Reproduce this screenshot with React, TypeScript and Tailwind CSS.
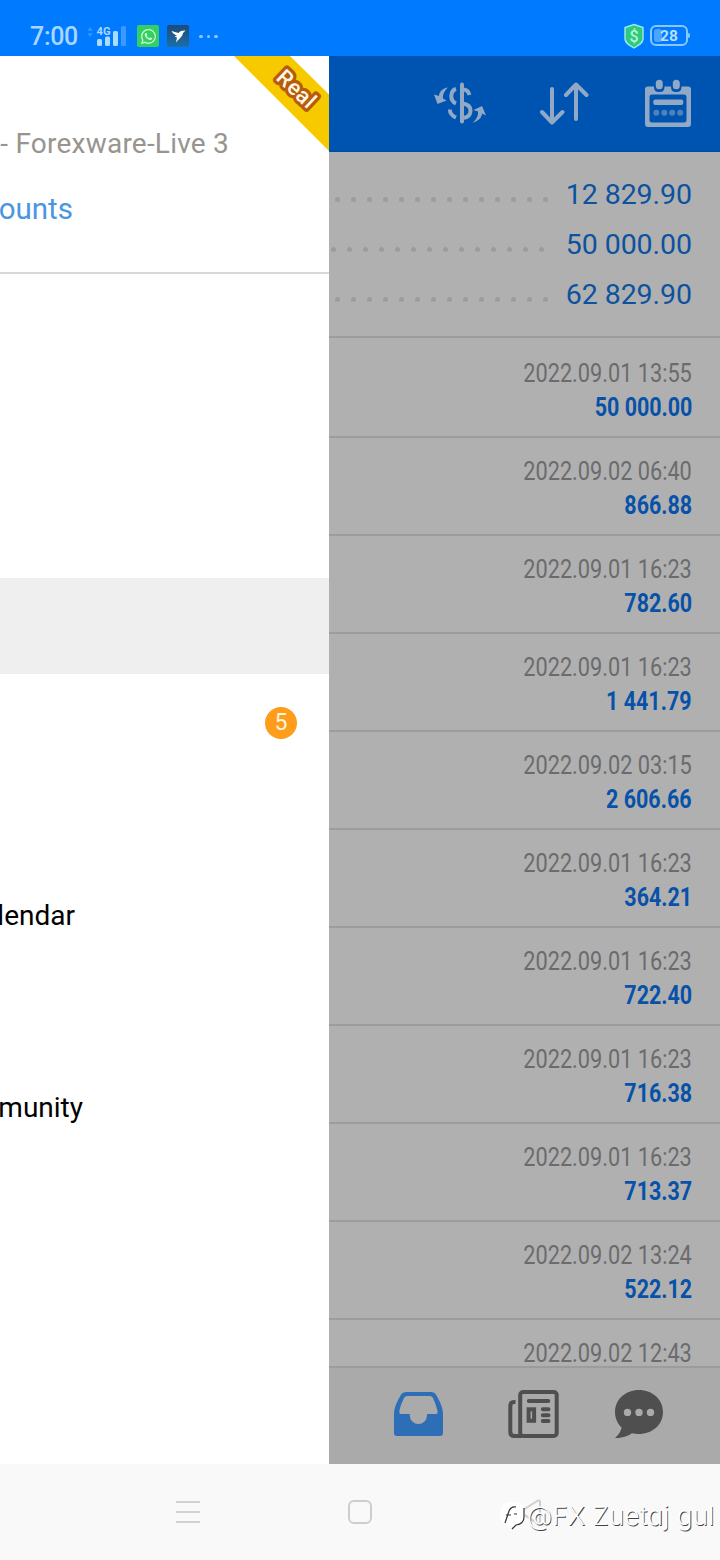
import { FaWhatsapp } from "react-icons/fa";

const summary = [
  { value: "12 829.90", gap: "mr-[17px]" },
  { value: "50 000.00", gap: "mr-[21px]" },
  { value: "62 829.90", gap: "mr-[17px]" },
];

const deals = [
  { date: "2022.09.01 13:55", profit: "50 000.00" },
  { date: "2022.09.02 06:40", profit: "866.88" },
  { date: "2022.09.01 16:23", profit: "782.60" },
  { date: "2022.09.01 16:23", profit: "1 441.79" },
  { date: "2022.09.02 03:15", profit: "2 606.66" },
  { date: "2022.09.01 16:23", profit: "364.21" },
  { date: "2022.09.01 16:23", profit: "722.40" },
  { date: "2022.09.01 16:23", profit: "716.38" },
  { date: "2022.09.01 16:23", profit: "713.37" },
  { date: "2022.09.02 13:24", profit: "522.12" },
  { date: "2022.09.02 12:43", profit: "" },
];

const menu = [
  { label: "" },
  { label: "" },
  { label: "" },
  { label: "", active: true },
  { label: "", badge: 5 },
  { label: "" },
  { label: "lendar", width: "w-[75px]" },
  { label: "" },
  { label: "munity", width: "w-[83px]" },
];

function StatusBar() {
  return (
    <div className="h-14 shrink-0 bg-[#007aff] flex items-end pl-[30px] pr-[32px] pb-[8px] text-[#a9d6ff]">
      <span className="w-[58px] text-[25px] leading-6 tracking-[-0.3px] font-medium relative top-px">7:00</span>
      <svg className="w-[40px] h-[24px]" viewBox="0 0 40 24">
        <path d="M-1 7l3-4 3 4zM-1 9l3 4 3-4z" fill="#2f93ff" />
        <text x="8.5" y="10.5" fontSize="11.5" fontWeight="700" fill="#a9d6ff" fontFamily="Roboto" textLength="14" lengthAdjust="spacingAndGlyphs">4G</text>
        <rect x="9" y="15" width="5" height="7" rx="1.5" fill="#a9dcff" />
        <rect x="17" y="12.500" width="5" height="9.500" rx="1.5" fill="#a9dcff" />
        <rect x="25" y="7" width="5" height="15" rx="1.5" fill="#a9dcff" />
        <rect x="33" y="2" width="5" height="20" rx="1.5" fill="#3d9aff" />
      </svg>
      <div className="ml-[9px] mb-[1px] w-[22px] h-[22px] rounded-[2px] bg-[#34cf62] flex items-center justify-center">
        <FaWhatsapp className="text-[#d3fbd9]" size={17} />
      </div>
      <div className="ml-[8px] mb-[1px] w-[22px] h-[22px] rounded-[2px] bg-linear-to-b from-[#1c4b79] to-[#1c6fa8]">
        <svg className="w-[22px] h-[22px]" viewBox="0 0 22 22" fill="#fff">
          <path d="M4.500 6L11.500 8C13 6 15 5.300 18.500 5.500L16 8C15.500 11.500 12.500 13.500 9 17.500L10 12.500L7.500 11.500L10 10.500C7.500 9.500 5.500 8 4.500 6Z" />
        </svg>
      </div>
      <div className="ml-[10px] mb-[10px] flex gap-[4px]">
        <i className="w-[3.5px] h-[3.5px] rounded-full bg-[#8cc8ff]" />
        <i className="w-[3.5px] h-[3.5px] rounded-full bg-[#8cc8ff]" />
        <i className="w-[3.5px] h-[3.5px] rounded-full bg-[#8cc8ff]" />
      </div>
      <svg className="ml-auto w-[20px] h-[26px] mb-[-1px]" viewBox="0 0 20 26">
        <path d="M10 1.500L19 4.500V16C19 20 14.500 22.500 10 25C5.500 22.500 1 20 1 16V4.500Z" fill="#2ecb7c" stroke="#9fe9ee" strokeWidth="1.400" />
        <text x="10" y="18.5" fontSize="16" fontWeight="500" textAnchor="middle" fill="#b4f5d2" fontFamily="Roboto">$</text>
      </svg>
      <div className="ml-[6px] mb-[2px] relative w-[38px] h-[21px] rounded-[6px] border-2 border-[#8ac7ff] flex items-center justify-center">
        <i className="absolute left-[2px] top-[2px] w-[8px] h-[13px] rounded-[3px] bg-[#4da4ff]" />
        <span className="relative text-[15.500px] font-bold leading-4 text-[#b9deff]">28</span>
        <i className="absolute -right-[4px] top-[6px] w-[2px] h-[5px] rounded-r bg-[#8ac7ff]" />
      </div>
    </div>
  );
}

function Drawer() {
  return (
    <aside className="relative w-[329px] shrink-0 bg-white overflow-hidden text-[28px] leading-8">
      <svg className="absolute right-0 top-0 w-[96px] h-[96px]" viewBox="0 0 96 96">
        <path d="M1 0H57L96 38.500V95Z" fill="#f7ca00" />
        <text
          x="0"
          y="0"
          transform="translate(63.500 33) rotate(43)"
          dy="7.500"
          textAnchor="middle"
          fontFamily="Roboto"
          fontSize="22"
          fontWeight="500"
          letterSpacing="0.500"
          fill="#fff6e6"
          stroke="#b65c0a"
          strokeWidth="6.500"
          strokeLinejoin="round"
          paintOrder="stroke"
        >
          Real
        </text>
      </svg>
      <div className="h-[218px] border-b-2 border-[#d8d8d8] pt-[72px]">
        <p className="w-[229px] flex justify-end whitespace-nowrap tracking-[0.22px] text-[#98948f]">- Forexware-Live 3</p>
        <p className="mt-[33px] w-[73px] flex justify-end text-[29.500px] text-[#4a97e0]">ounts</p>
      </div>
      <nav className="pt-4">
        {menu.map((item, index) => (
          <div key={index} className={item.active ? "h-24 bg-[#efefef]" : "h-24 flex items-center text-black"}>
            {item.label && <span className={`${item.width} mt-[3px] flex justify-end`}>{item.label}</span>}
            {item.badge && (
              <span className="ml-auto mr-8 mt-[2px] w-8 h-8 rounded-full bg-[#ff9c1a] text-[#fff3dc] text-[23px] flex items-center justify-center">
                {item.badge}
              </span>
            )}
          </div>
        ))}
      </nav>
    </aside>
  );
}

function Toolbar() {
  return (
    <header className="h-24 shrink-0 bg-[#0054b1] border-b-2 border-[#004fa6] flex items-start pl-[104px] text-[#91a9c4]">
      <svg className="mt-[26px] w-[54px] h-[42px]" viewBox="0 0 54 42" fill="none" stroke="currentColor" strokeWidth="4">
        <path d="M29 2.500V39.500" strokeLinecap="round" />
        <path d="M23 7C17.500 8.500 16 18.500 23 21.500M16.800 27.500C17 31 19 34 23 35.500M30 7.500C33 7.500 35.500 9 36.500 13M30 21.500C35.500 22.500 37.500 25 37.500 28.500C37.500 32.500 35 35.500 30 36" />
        <path d="M15 5.500C11 6 6 9 6 14L1 12.500L4.500 22L13.500 18.500L10 16.500C9.500 12 12 8 15 5.500Z" fill="currentColor" stroke="none" />
        <path d="M39.500 41C44 39 49 36.500 49 31.500L53 33.500L49 24L40.500 28L45 29.500C45.500 34 43 38 39.500 41Z" fill="currentColor" stroke="none" />
      </svg>
      <svg className="mt-6 ml-[53px] w-[50px] h-[46px]" viewBox="0 0 50 46" fill="none" stroke="currentColor" strokeWidth="4" strokeLinecap="round" strokeLinejoin="round">
        <path d="M12 9V42M2 32L12 42.500L22.500 32M36 5V39M26 15L36 4.500L46.500 15" />
      </svg>
      <svg className="mt-[23px] ml-[55px] w-[46px] h-[49px]" viewBox="0 0 46 49" fill="currentColor">
        <path fillRule="evenodd" d="M3 7.500H9C9 12 11 13 14.300 13S19.500 12 19.500 7.500H26C26 12 28 13 31.300 13S36.500 12 36.500 7.500H43Q46 7.500 46 10.500V45Q46 48 43 48H3Q0 48 0 45V10.500Q0 7.500 3 7.500ZM7 15.500Q4.500 15.500 4.500 18V41Q4.500 43.500 7 43.500H39Q41.500 43.500 41.500 41V18Q41.500 15.500 39 15.500Z" />
        <rect x="10.800" y="0.800" width="7" height="9.500" rx="3.500" />
        <rect x="27.800" y="0.800" width="7" height="9.500" rx="3.500" />
        <rect x="8.300" y="20.500" width="30" height="5.600" rx="2" />
        <g opacity="0.550">
          <circle cx="11.300" cy="33.700" r="3" />
          <circle cx="19.300" cy="33.700" r="3" />
          <circle cx="27.200" cy="33.700" r="3" />
          <circle cx="35.200" cy="33.700" r="3" />
        </g>
      </svg>
    </header>
  );
}

function TabBar() {
  return (
    <footer className="h-[98px] shrink-0 bg-[#aaaaaa] border-t-2 border-[#9c9c9c] flex items-start pl-[65px] text-[#4f4f4f]">
      <svg className="mt-6 w-[49px] h-[44px]" viewBox="0 0 49 44" fill="#2d6eb6">
        <path fillRule="evenodd" d="M12 0H37.500Q40.500 0 42 2.500C45 8 49 15 49 22V41Q49 44 46 44H3Q0 44 0 41V22C0 15 4 8 7 2.500Q8.500 0 12 0ZM13.500 4Q11 4 10 6C8 10 6 15 5.300 19.500Q5 22 7 22H15.800V23.500A8.600 8.600 0 0 0 33 23.500V22H42Q44 22 43.600 19.500C42.500 15 41 10 39 6Q38 4 35.500 4Z" />
      </svg>
      <svg className="mt-[22px] ml-[65px] w-[51px] h-[48px]" viewBox="0 0 51 48" fill="none" stroke="currentColor" strokeWidth="4">
        <rect x="12.200" y="2" width="36.500" height="44" rx="3" />
        <path d="M7.500 12H6Q2.300 12 2.300 16V42Q2.300 46 6.500 46H14" />
        <path d="M20.800 11H40.300M34.800 19.200H40.500M34.800 25.200H40.500M34.800 31H40.500" strokeLinecap="round" />
        <rect x="20.600" y="19.300" width="5.500" height="11.500" />
      </svg>
      <svg className="mt-[22px] ml-[56px] w-[48px] h-[48px]" viewBox="0 0 48 48" fill="currentColor">
        <path fillRule="evenodd" d="M24 0C37.500 0 48 9.500 48 22S37.500 44 24 44C21.500 44 19 43.800 17 43.200C13 46 7 48 0 48C3 45.500 6 41.500 6.500 37.500C2.500 33.500 0 28 0 22C0 9.500 10.500 0 24 0ZM12.500 18.700a3.700 3.700 0 1 0 0 7.400a3.700 3.700 0 1 0 0-7.400ZM24 18.700a3.700 3.700 0 1 0 0 7.400a3.700 3.700 0 1 0 0-7.400ZM35.500 18.700a3.700 3.700 0 1 0 0 7.400a3.700 3.700 0 1 0 0-7.400Z" />
      </svg>
    </footer>
  );
}

function History() {
  return (
    <main className="flex-1 min-w-0 flex flex-col bg-[#b0b0b0]">
      <Toolbar />
      <section className="h-[186px] shrink-0 border-b-2 border-[#9c9c9c] pt-[17px] pr-7 mb-[2px]">
        {summary.map((row, index) => (
          <div key={index} className="h-[50px] flex items-center justify-end overflow-hidden">
            <div className={`${row.gap} mt-[10px] flex shrink-0 gap-[11px]`}>
              {Array.from({ length: 14 }, (_, dot) => (
                <i key={dot} className="w-[5px] h-[5px] rounded-full bg-[#9c9c9c]" />
              ))}
            </div>
            <span className="w-[127px] mt-[2px] flex justify-end whitespace-nowrap text-[28.500px] tracking-[-0.05px] text-[#0b529f]">{row.value}</span>
          </div>
        ))}
      </section>
      <section className="flex-1 min-h-0 overflow-hidden">
        {deals.map((deal, index) => (
          <div key={index} className="h-[98px] border-b-2 border-[#9c9c9c] pt-[16px] pr-[28px] flex flex-col items-end whitespace-nowrap leading-[34px]">
            <span className="text-[26px] text-[#6b6b6d] origin-right scale-x-[0.835]">{deal.date}</span>
            <span className="text-[26px] font-bold text-[#0752a8] origin-right scale-x-[0.825]">{deal.profit}</span>
          </div>
        ))}
      </section>
      <TabBar />
    </main>
  );
}

function SystemNav() {
  return (
    <div className="relative h-24 shrink-0 bg-[#f9f9f9] flex items-center pl-[176px]">
      <div className="w-6 flex flex-col gap-2">
        <i className="h-[2px] bg-[#d2d2d2]" />
        <i className="h-[2px] bg-[#d2d2d2]" />
        <i className="h-[2px] bg-[#d2d2d2]" />
      </div>
      <div className="ml-[148px] w-6 h-6 rounded-[6px] border-2 border-[#cecece]" />
      <svg className="ml-[148px] w-6 h-7" viewBox="0 0 24 28" fill="none" stroke="#cecece" strokeWidth="2">
        <path d="M18 2.500L3 12Q1 14 3 16L18 25.500Q20 26 20 24V4Q20 2 18 2.500Z" />
      </svg>
      <div className="absolute left-[500px] top-[36px] flex items-center">
        <svg className="w-[27px] h-[32px]" viewBox="0 0 27 32">
          <rect x="0" y="2" width="25" height="24" rx="10" fill="#fff" />
          <path d="M5 23L9 11Q11 6 16 7M6 15H11M14 14H17M24 8V17Q24 24 16 25L12 29" fill="none" stroke="#333" strokeWidth="1.200" />
        </svg>
        <span className="font-[Inter] font-light text-[26px] leading-8 whitespace-nowrap text-white tracking-[0.15px] [font-feature-settings:'cv11'] [text-shadow:0.8px_0.8px_0.4px_#444]">
          @FX Zuetaj gul
        </span>
      </div>
    </div>
  );
}

export default function App() {
  return (
    <div className="w-[720px] h-[1560px] flex flex-col overflow-hidden font-[Roboto,sans-serif]">
      <StatusBar />
      <div className="flex-1 min-h-0 flex">
        <Drawer />
        <History />
      </div>
      <SystemNav />
    </div>
  );
}
